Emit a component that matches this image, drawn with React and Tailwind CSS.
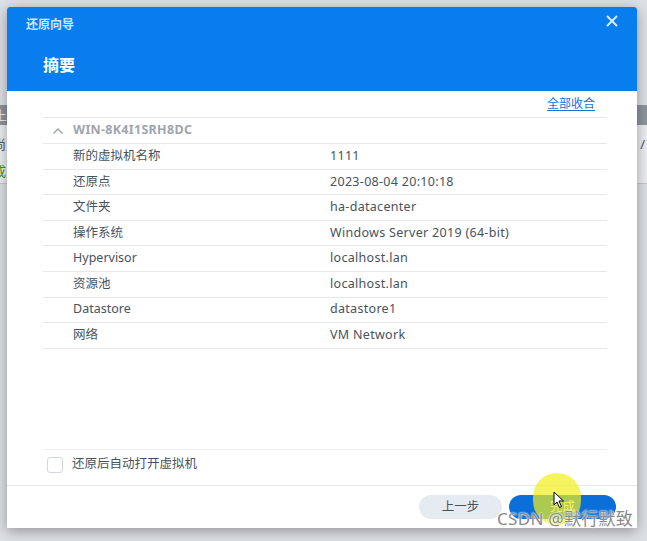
const rows = [
  ["新的虚拟机名称", "1111"],
  ["还原点", "2023-08-04 20:10:18"],
  ["文件夹", "ha-datacenter"],
  ["操作系统", "Windows Server 2019 (64-bit)"],
  ["Hypervisor", "localhost.lan"],
  ["资源池", "localhost.lan"],
  ["Datastore", "datastore1"],
  ["网络", "VM Network"],
];

function Backdrop() {
  return (
    <div className="absolute inset-0 bg-[#dde0e5]">
      <div className="h-[105px]" />
      <div className="h-[20px] bg-[#8f959d] text-[13px] text-[#e8eaed] leading-[20px] flex">
        <span className="-ml-[6px]">上</span>
      </div>
      <div className="h-[58px] bg-[#eceef1] flex flex-col text-[13px] leading-none">
        <div className="flex justify-between pt-[13px]">
          <span className="-ml-[7px] text-[#555]">尚</span>
          <span className="text-[#555] mr-[2px]">? /</span>
        </div>
        <span className="-ml-[7px] mt-[14px] text-[#3a9a2a]">成</span>
      </div>
      <div className="h-px bg-[#c3c7cd]" />
    </div>
  );
}

export default function App() {
  return (
    <div
      className="relative w-[647px] h-[541px] overflow-hidden"
      style={{ fontFamily: '"Noto Sans", "Noto Sans CJK SC", sans-serif' }}
    >
      <Backdrop />

      <div className="absolute left-[7px] top-[7px] w-[630px] h-[521px] bg-white rounded-t-[3px] shadow-[0_3px_14px_rgba(0,0,0,0.35)] flex flex-col">
        {/* header */}
        <div className="h-[84px] bg-[#087ded] rounded-t-[3px] relative">
          <div className="absolute left-[19px] top-[9px] text-[12px] font-bold text-[#cfe5ff]">
            还原向导
          </div>
          <button className="absolute right-[19px] top-[8px] text-[#d7ebff]">
            <svg width="12" height="12" viewBox="0 0 12 12">
              <path d="M1.5 1.5 L10.5 10.5 M10.5 1.5 L1.5 10.5" stroke="currentColor" strokeWidth="2" strokeLinecap="round" />
            </svg>
          </button>
          <div className="absolute left-[36px] top-[46px] text-[16px] font-bold text-white">
            摘要
          </div>
        </div>

        {/* body */}
        <div className="flex-1 pl-[36px] pr-[30px] flex flex-col">
          <div className="h-[26px] flex items-center justify-end pr-[12px]">
            <a className="text-[12px] text-[#1a73d6] underline underline-offset-2">全部收合</a>
          </div>
          <div className="border-t border-[#e6e8eb]" />
          <div className="h-[26px] flex items-center border-b border-[#e6e8eb]">
            <svg width="12" height="8" viewBox="0 0 12 8" className="ml-[9px] mr-[9px]">
              <path d="M1.5 6.5 L6 2 L10.5 6.5" stroke="#9aa0a8" strokeWidth="1.4" fill="none" />
            </svg>
            <span className="text-[12.5px] font-bold text-[#a0a5ad] tracking-[0.3px]">WIN-8K4I1SRH8DC</span>
          </div>
          {rows.map(([k, v]) => (
            <div key={k} className="h-[25.6px] flex items-center border-b border-[#e6e8eb] text-[12.5px] text-[#48525c]">
              <span className="w-[287px] pl-[30px]">{k}</span>
              <span className="tracking-[0.3px]">{v}</span>
            </div>
          ))}
          <div className="flex-1" />
          <div className="border-t border-[#eceef0] h-[30px] mb-[6px] flex items-center">
            <span className="w-[16px] h-[16px] ml-[4px] mr-[9px] rounded-[3px] border border-[#d3d7dc] bg-white" />
            <span className="text-[12.5px] text-[#48525c]">还原后自动打开虚拟机</span>
          </div>
        </div>

        {/* footer */}
        <div className="h-[43px] border-t border-[#e6e8eb] flex items-center justify-end gap-[7px] pr-[21px] relative">
          <button className="w-[83px] h-[24px] rounded-full bg-[#e6ebf2] text-[12.5px] text-[#48525c]">
            上一步
          </button>
          <button className="w-[107px] h-[24px] rounded-full bg-[#0a6fd8] text-[12.5px] text-white">
            完成
          </button>
          <div className="absolute left-[526px] top-[-13px] w-[48px] h-[52px] rounded-full bg-[#f2f01a]/70" />
          <svg className="absolute left-[546px] top-[5px]" width="12" height="18" viewBox="0 0 12 18">
            <path d="M1 1 L1 14 L4 11 L6.5 16.5 L8.5 15.5 L6 10 L10.5 10 Z" fill="white" stroke="black" strokeWidth="1" strokeLinejoin="round" />
          </svg>
        </div>
      </div>

      <div
        className="absolute left-[497px] top-[510px] text-[17px] text-[#8a8a8a] leading-none tracking-[0.3px]"
        style={{ textShadow: "0 0 2px #fff, 0 0 2px #fff" }}
      >
        CSDN @默行默致
      </div>
    </div>
  );
}
